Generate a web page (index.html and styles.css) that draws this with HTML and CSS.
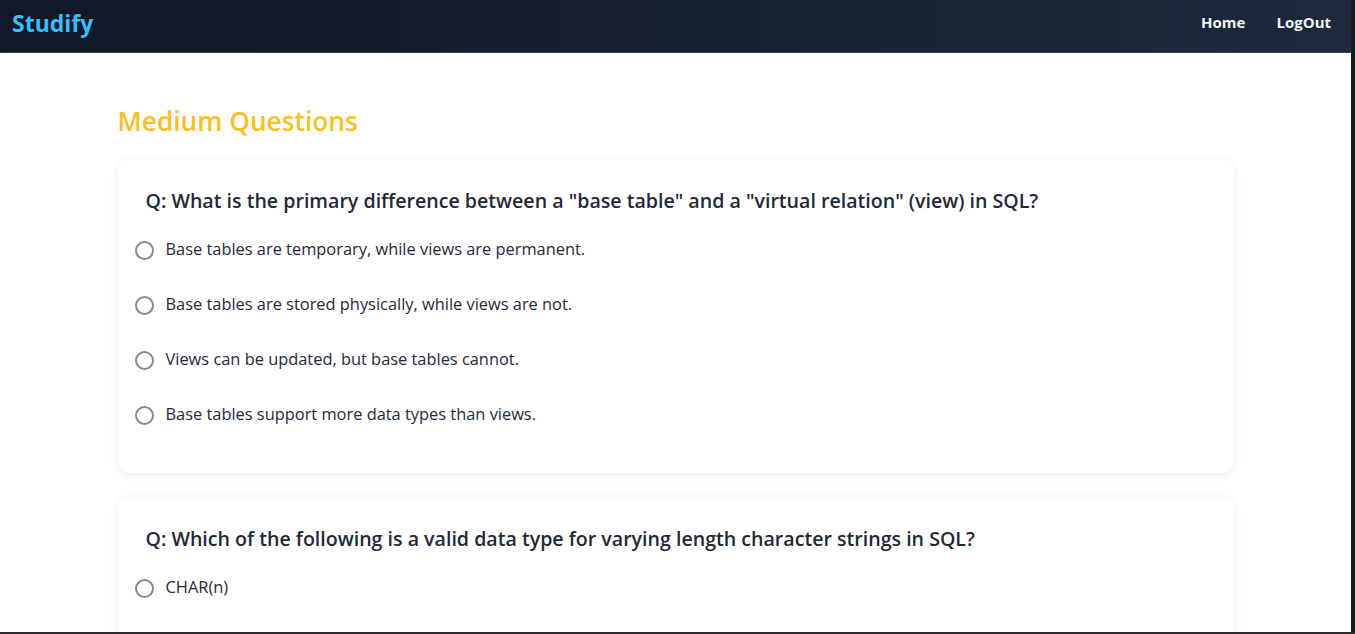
FILE: index.html
```html
<!DOCTYPE html>
<html>
<head>
<meta charset="utf-8">
<link rel="stylesheet" href="styles.css">
</head>
<body>
<div class="frame">
  <nav class="navbar">
    <div class="brand">Studify</div>
    <div class="links">
      <a class="link">Home</a>
      <a class="link">LogOut</a>
    </div>
  </nav>
  <main class="content">
    <h1 class="title">Medium Questions</h1>
    <section class="card">
      <h2 class="question">Q: What is the primary difference between a "base table" and a "virtual relation" (view) in SQL?</h2>
      <ul class="options">
        <li class="option"><span class="radio"></span><span>Base tables are temporary, while views are permanent.</span></li>
        <li class="option"><span class="radio"></span><span>Base tables are stored physically, while views are not.</span></li>
        <li class="option"><span class="radio"></span><span>Views can be updated, but base tables cannot.</span></li>
        <li class="option"><span class="radio"></span><span>Base tables support more data types than views.</span></li>
      </ul>
    </section>
    <section class="card">
      <h2 class="question">Q: Which of the following is a valid data type for varying length character strings in SQL?</h2>
      <ul class="options">
        <li class="option"><span class="radio"></span><span>CHAR(n)</span></li>
      </ul>
    </section>
  </main>
</div>
<div class="bottom-strip"></div>
</body>
</html>
```
FILE: styles.css
```css
html, body {
  margin: 0;
  padding: 0;
  height: 634px;
  overflow: hidden;
}
body {
  background: #1c1c1c;
  font-family: "Open Sans", "Noto Sans", sans-serif;
  display: flex;
  flex-direction: column;
}
.frame {
  width: 1351px;
  height: 632px;
  background: #ffffff;
  overflow: hidden;
  flex: none;
}
.bottom-strip {
  height: 2px;
  background: #2a2a2a;
}
.navbar {
  height: 53px;
  box-sizing: border-box;
  background: linear-gradient(90deg, #111827 0%, #1e293b 100%);
  border-bottom: 1px solid #374151;
  display: flex;
  align-items: center;
  justify-content: space-between;
  padding: 0 20px 0 12px;
}
.brand {
  color: #38bdf8;
  font-size: 23px;
  font-weight: 700;
  margin-top: -6px;
}
.links {
  display: flex;
  gap: 31px;
  margin-top: -8px;
}
.link {
  color: #f1f5f9;
  font-weight: 700;
  font-size: 15px;
}
.content {
  width: 1116px;
  margin: 0 auto;
  padding-top: 50px;
}
.title {
  margin: 0 0 20px 0;
  color: #fbbf24;
  font-size: 26.3px;
  font-weight: 600;
  line-height: 36px;
}
.card {
  background: #fff;
  border-radius: 12px;
  box-shadow: 0 2px 10px rgba(0,0,0,0.08);
  padding: 28px 28px 32px 28px;
  margin-bottom: 24px;
}
.question {
  margin: 0 0 6px 0;
  font-size: 19.6px;
  font-weight: 600;
  color: #1f2937;
  line-height: 28px;
}
.options {
  list-style: none;
  margin: 0 0 0 -11px;
  padding: 0;
}
.option {
  display: flex;
  align-items: center;
  gap: 12px;
  height: 55px;
  font-size: 16.4px;
  color: #1f2937;
}
.radio {
  width: 15px;
  height: 15px;
  border: 2px solid #8a8a8a;
  border-radius: 50%;
  flex: none;
  margin-top: 4px;
}
```
